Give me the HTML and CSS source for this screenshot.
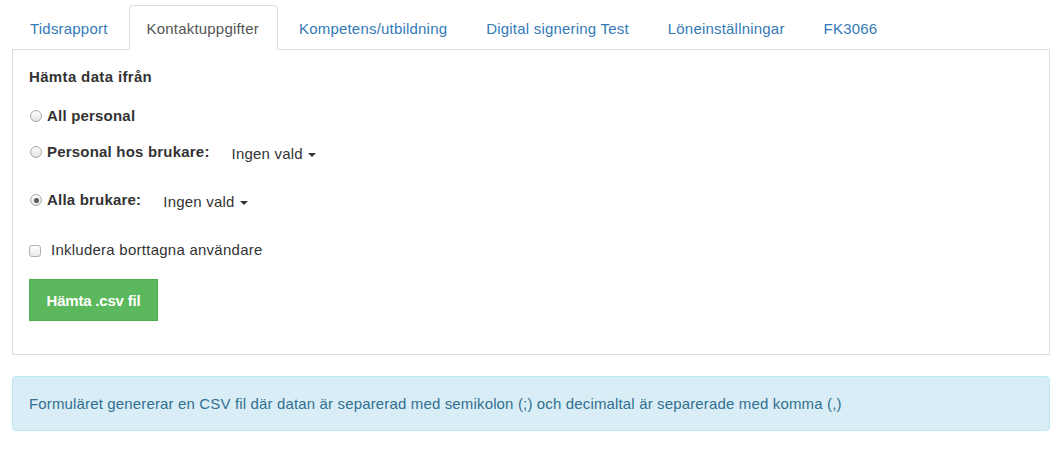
FILE: index.html
```html
<!DOCTYPE html>
<html lang="sv">
<head>
<meta charset="utf-8">
<title>Kontaktuppgifter</title>
<link rel="stylesheet" href="styles.css">
</head>
<body>
<div class="page">
  <ul class="tabs">
    <li class="tab"><a href="#">Tidsrapport</a></li>
    <li class="tab active"><a href="#">Kontaktuppgifter</a></li>
    <li class="tab"><a href="#">Kompetens/utbildning</a></li>
    <li class="tab"><a href="#">Digital signering Test</a></li>
    <li class="tab"><a href="#">Löneinställningar</a></li>
    <li class="tab"><a href="#">FK3066</a></li>
  </ul>
  <div class="panel">
    <div class="heading">Hämta data ifrån</div>
    <div class="row row-1">
      <label class="choice"><span class="radio"></span><span class="choice-text">All personal</span></label>
    </div>
    <div class="row row-2">
      <label class="choice"><span class="radio"></span><span class="choice-text">Personal hos brukare:</span></label>
      <span class="dropdown">Ingen vald<span class="caret"></span></span>
    </div>
    <div class="row row-3">
      <label class="choice"><span class="radio checked"></span><span class="choice-text">Alla brukare:</span></label>
      <span class="dropdown">Ingen vald<span class="caret"></span></span>
    </div>
    <div class="row row-check">
      <label class="check"><span class="checkbox"></span><span class="check-text">Inkludera borttagna användare</span></label>
    </div>
    <div class="actions">
      <button class="btn-success" type="button">Hämta .csv fil</button>
    </div>
  </div>
  <div class="alert">Formuläret genererar en CSV fil där datan är separerad med semikolon (;) och decimaltal är separerade med komma (,)</div>
</div>
</body>
</html>
```

FILE: styles.css
```css
html, body {
  margin: 0;
  padding: 0;
  background: #fff;
}
body {
  font-family: "Liberation Sans", Arial, Helvetica, sans-serif;
  font-size: 15px;
  line-height: 20px;
  color: #333;
  letter-spacing: 0.2px;
}
.page {
  padding: 5px 14px 0 12px;
}
.tabs {
  display: flex;
  margin: 0;
  padding: 0;
  list-style: none;
  border-bottom: 1px solid #ddd;
}
.tab {
  margin-right: 3px;
  margin-bottom: -1px;
}
.tab a {
  display: block;
  padding: 13px 17px 10px;
  line-height: 20px;
  color: #337ab7;
  text-decoration: none;
  border: 1px solid transparent;
  border-radius: 4px 4px 0 0;
  letter-spacing: 0.2px;
}
.tab.active a {
  padding-right: 18px;
  color: #555;
  background: #fff;
  border-color: #ddd #ddd transparent;
}
.panel {
  border: 1px solid #ddd;
  border-top: 0;
  padding: 17px 16px 33px;
}
.heading {
  font-weight: bold;
  line-height: 20px;
  letter-spacing: 0.35px;
}
.row {
  display: flex;
  align-items: flex-start;
  height: 20px;
}
.row-1 { margin-top: 19px; }
.row-2 { margin-top: 16px; }
.row-3 { margin-top: 28px; }
.row-check { margin-top: 30px; }
.choice, .check {
  display: flex;
  align-items: center;
  height: 20px;
}
.choice-text {
  font-weight: bold;
  margin-left: 5px;
  letter-spacing: 0.2px;
}
.radio {
  box-sizing: border-box;
  width: 12px;
  height: 12px;
  margin-left: 1px;
  border-radius: 50%;
  border: 1px solid #a9a9a9;
  background: linear-gradient(#fdfdfd, #e4e4e4);
  display: flex;
  align-items: center;
  justify-content: center;
}
.radio.checked::after {
  content: "";
  width: 5px;
  height: 5px;
  border-radius: 50%;
  background: #5a5a5a;
}
.dropdown {
  margin-left: 22px;
  margin-top: 2px;
  display: flex;
  align-items: center;
  font-weight: normal;
  color: #333;
}
.caret {
  width: 0;
  height: 0;
  margin-left: 5px;
  margin-top: 1px;
  border-top: 4px solid #333;
  border-left: 4px solid transparent;
  border-right: 4px solid transparent;
}
.checkbox {
  box-sizing: border-box;
  width: 12px;
  height: 12px;
  margin-top: 1px;
  border: 1px solid #b0b0b0;
  border-radius: 3px;
  background: linear-gradient(#fefefe, #e9e9e9);
}
.check-text {
  margin-left: 10px;
  letter-spacing: 0.25px;
}
.actions {
  margin-top: 19px;
  display: flex;
}
.btn-success {
  width: 129px;
  height: 42px;
  padding: 0;
  border: 1px solid #4cae4c;
  border-radius: 0;
  background: #5cb85c;
  color: #fff;
  font-family: inherit;
  font-size: 15px;
  font-weight: bold;
  letter-spacing: -0.2px;
}
.alert {
  margin-top: 21px;
  padding: 16px 16px;
  line-height: 21px;
  border: 1px solid #bce8f1;
  border-radius: 4px;
  background: #d9edf7;
  color: #31708f;
  letter-spacing: 0.15px;
}
```
